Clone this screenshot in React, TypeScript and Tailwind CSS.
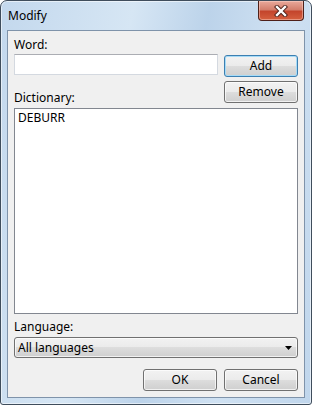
const face =
  "rounded-[3px] border bg-[linear-gradient(#f2f2f2,#ebebeb_49%,#dddddd_50%,#cfcfcf)] text-[12px] text-black";
const btn = "flex items-center justify-center " + face;
const plain = " border-[#707070] shadow-[inset_0_0_0_1px_rgba(255,255,255,0.7)]";

function CloseButton() {
  return (
    <div className="flex h-[20px] w-[46px] items-center justify-center rounded-b-[4px] border border-t-0 border-[#4e2019] bg-[linear-gradient(#e9a99b,#d47f6d_45%,#c4452c_55%,#d5603f)] shadow-[inset_0_0_0_1px_rgba(255,220,210,0.45)]">
      <svg width="14" height="12" viewBox="0 0 14 12">
        <path d="M3 2 L11 10 M11 2 L3 10" stroke="#4a1f18" strokeWidth="4.2" strokeLinecap="square" />
        <path d="M3 2 L11 10 M11 2 L3 10" stroke="#ffffff" strokeWidth="2.4" strokeLinecap="square" />
      </svg>
    </div>
  );
}

export default function App() {
  return (
    <div
      className="flex h-[405px] w-[312px] flex-col rounded-t-[7px] rounded-b-[3px] border border-[#3f4d5c] bg-[linear-gradient(100deg,#c3d8ed_0%,#d6e6f4_35%,#bcd3ea_55%,#cfe1f2_75%,#c0d6ec_100%)] text-black shadow-[inset_0_0_0_1px_rgba(255,255,255,0.55)]"
      style={{ fontFamily: '"Noto Sans", "Open Sans", sans-serif' }}
    >
      <div className="flex h-[29px] items-start justify-between">
        <span className="pl-[7px] pt-[7px] text-[12px] leading-[15px]">Modify</span>
        <div className="mr-[7px]">
          <CloseButton />
        </div>
      </div>
      <div className="mx-[6px] mb-[6px] flex flex-1 flex-col border border-[#7f93aa] bg-[#f0f0f0] px-[6px] text-[12px]">
        <div className="flex gap-[6px]">
          <div className="flex w-[204px] flex-col pt-[6px]">
            <span className="h-[15px] leading-[15px]">Word:</span>
            <div className="mt-[2px] h-[21px] border border-[#d4d9e0] border-t-[#abadb3] bg-white" />
            <span className="mt-[15px] h-[15px] leading-[15px]">Dictionary:</span>
          </div>
          <div className="flex w-[74px] flex-col pt-[24px]">
            <button className={btn + " h-[22px] border-[#3c7fb1] shadow-[inset_0_0_0_1px_#a6dbf7]"}>Add</button>
            <button className={btn + plain + " mt-[4px] h-[22px]"}>Remove</button>
          </div>
        </div>
        <div className="mt-[3px] h-[206px] border border-[#828790] bg-white px-[3px] py-[1px] leading-[15px]">
          DEBURR
        </div>
        <span className="mt-[5px] h-[15px] leading-[15px]">Language:</span>
        <div className={"mt-[3px] flex h-[21px] items-center justify-between pl-[3px] pr-[5px] " + face + plain}>
          <span>All languages</span>
          <svg width="7" height="4" viewBox="0 0 7 4">
            <path d="M0 0 H7 L3.5 4 Z" fill="#000" />
          </svg>
        </div>
        <div className="mt-[11px] flex justify-end gap-[7px]">
          <button className={btn + plain + " h-[22px] w-[74px]"}>OK</button>
          <button className={btn + plain + " h-[22px] w-[74px]"}>Cancel</button>
        </div>
      </div>
    </div>
  );
}
